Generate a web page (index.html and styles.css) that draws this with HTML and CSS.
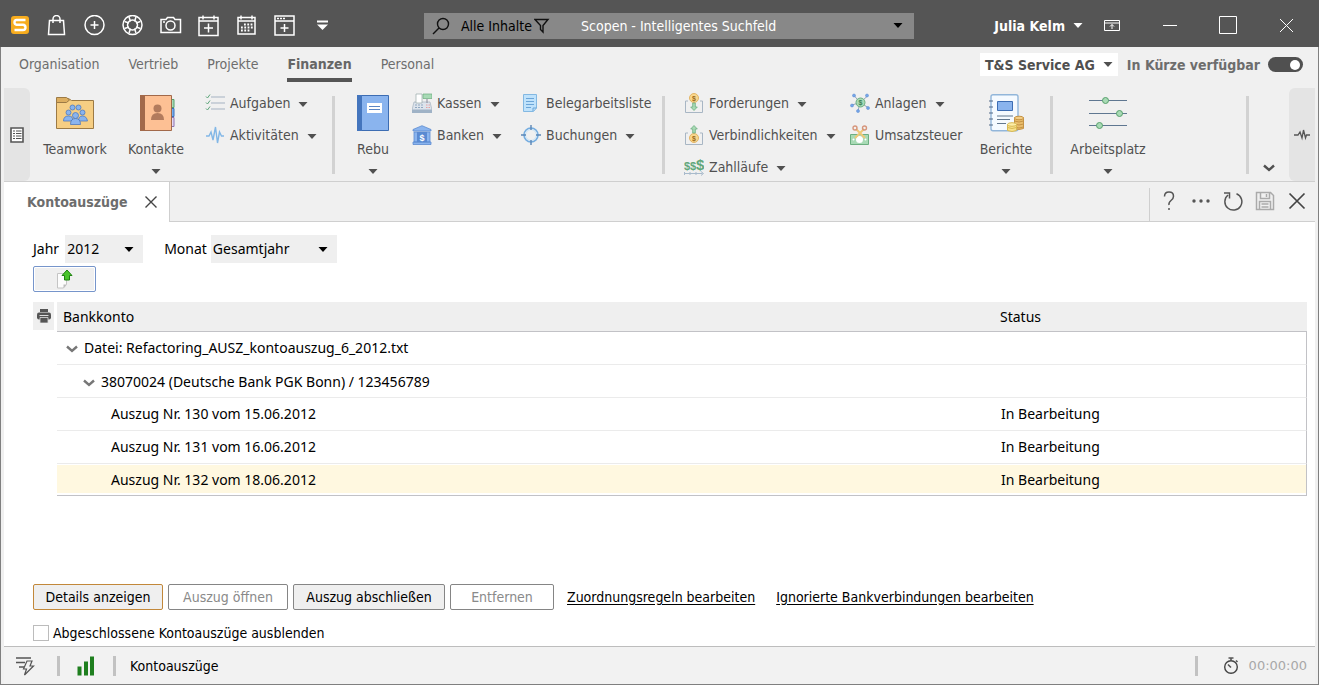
FILE: index.html
```html
<!DOCTYPE html>
<html lang="de">
<head>
<meta charset="utf-8">
<title>Kontoauszüge</title>
<link rel="stylesheet" href="styles.css">
</head>
<body>
<svg class="defs" aria-hidden="true">
  <symbol id="arrow" viewBox="0 0 10 5"><path d="M0.5 0h9L5 5z" fill="currentColor"/></symbol>
  <symbol id="chevron" viewBox="0 0 12 8"><path d="M1 1.500l5 4.500 5-4.500" fill="none" stroke="currentColor" stroke-width="2.400"/></symbol>
</svg>
<div class="window">
  <header class="titlebar">
    <div class="quick">
      <svg class="logo" viewBox="0 0 20 20"><rect x="1" y="0" width="18" height="18" rx="3" fill="#f7ac1e"/><path d="M15.500 4H6.500Q4.500 4 4.500 6.300Q4.500 8.500 6.500 8.700H13Q15.500 8.900 15.500 11.500Q15.500 14 13 14H4.500" fill="none" stroke="#fff" stroke-width="2.400"/></svg>
      <button class="tool" aria-label="Shop"><svg viewBox="0 0 22 22"><path d="M3.500 5.500h14l1 14h-16zM7 8V4a3.500 3.500 0 0 1 7 0v4"/></svg></button>
      <button class="tool" aria-label="Neu"><svg viewBox="0 0 22 22"><circle cx="10.500" cy="10" r="9.500"/><path d="M10.500 6v8M6.500 10h8"/></svg></button>
      <button class="tool" aria-label="Hilfe"><svg viewBox="0 0 22 22"><circle cx="10.500" cy="10" r="9.500"/><circle cx="10.500" cy="10" r="5"/><path d="M2.500 6.500L7 8M7 2l1.500 4.500M18.500 6.500L14 8M14 2l-1.500 4.500M2.500 13.500L7 12M7 18l1.500-4.500M18.500 13.500L14 12M14 18l-1.500-4.500"/></svg></button>
      <button class="tool" aria-label="Kamera"><svg viewBox="0 0 22 22"><path d="M1 4.500h5l1.500-2h6l1.500 2h5.500V17.500H1zM3 7h2"/><circle cx="10.500" cy="10.500" r="4.500"/></svg></button>
      <button class="tool" aria-label="Termin"><svg viewBox="0 0 22 22"><path d="M1 2.500h19v18H1zM1 6h19M5 .5v4M16 .5v4M10.500 8.500v9M6 13h9"/></svg></button>
      <button class="tool" aria-label="Kalender"><svg viewBox="0 0 22 22"><path d="M2 2.500h17V19H2zM2 6h17M5 .5v4M16 .5v4"/><path d="M8 9.500h9M5 12.500h12M5 15.500h9" stroke-width="2" stroke-dasharray="1.800 1.500"/></svg></button>
      <button class="tool" aria-label="Fenster"><svg viewBox="0 0 22 22"><path d="M1 1h19v19H1zM1 6h19M10.500 9v8M6.500 13h8"/><path d="M3 3.500h8" stroke-dasharray="2 1"/></svg></button>
      <button class="tool" aria-label="Anpassen"><svg viewBox="0 0 22 22"><path d="M5 6.500h11" stroke-width="2"/><path d="M5 9.500h11L10.500 15z" fill="#fff" stroke="none"/></svg></button>
    </div>
    <div class="search">
      <svg class="glass" viewBox="0 0 18 18"><circle cx="11" cy="7" r="5.500"/><path d="M7 11l-6 6"/></svg>
      <button class="scope">Alle Inhalte <svg viewBox="0 0 16 16"><path d="M1 1.500h13L9 7.500V14L6.500 11.500v-4z"/></svg></button>
      <input type="text" aria-label="Suche" placeholder="Scopen - Intelligentes Suchfeld">
      <button class="drop" aria-label="Suchverlauf"><svg class="arrow"><use href="#arrow"/></svg></button>
    </div>
    <div class="controls">
      <button class="user">Julia Kelm <svg class="arrow"><use href="#arrow"/></svg></button>
      <button class="ctl" aria-label="Menüband"><svg viewBox="0 0 20 20"><path d="M2.500 4.500h15v10h-15zM2.500 7h15M10 13V8.500M8 10.500l2-2 2 2"/></svg></button>
      <button class="ctl" aria-label="Minimieren"><svg viewBox="0 0 20 20"><path d="M3 9.500h14"/></svg></button>
      <button class="ctl" aria-label="Maximieren"><svg viewBox="0 0 20 20"><path d="M1.500 .5h17v17h-17z"/></svg></button>
      <button class="ctl" aria-label="Schließen"><svg viewBox="0 0 20 20"><path d="M4 3l13 13M17 3L4 16"/></svg></button>
    </div>
  </header>

  <nav class="menu">
    <a href="#organisation">Organisation</a>
    <a href="#vertrieb">Vertrieb</a>
    <a href="#projekte">Projekte</a>
    <a href="#finanzen" class="active">Finanzen</a>
    <a href="#personal">Personal</a>
    <div class="company">
      <button class="firm">T&amp;S Service AG <svg class="arrow"><use href="#arrow"/></svg></button>
      <label class="soon">In Kürze verfügbar <input type="checkbox" class="toggle" checked></label>
    </div>
  </nav>

  <section class="ribbon">
    <button class="strip left" aria-label="Navigation"><svg width="14" height="16" viewBox="0 0 14 16"><path d="M1 1h12v14H1z" fill="#fff" stroke="#555" stroke-width="1.600"/><path d="M3 4h2M3 6.500h2M3 9h2M3 11.500h2M6 4h5.500M6 6.500h5.500M6 9h5.500M6 11.500h5.500" stroke="#555"/></svg></button>

    <button class="big w80"><svg viewBox="0 0 40 38"><path d="M1.500 4.500h12l3 2h22v28h-37z" fill="#f6ce83" stroke="#9c7a45"/><path d="M1.500 3.500h10l3 2.500-3 2.500h-10z" fill="#dcae60" stroke="#9c7a45"/><g fill="#8ab4ee" stroke="#4c78c0" stroke-width=".8"><circle cx="17.500" cy="13.500" r="2.500"/><circle cx="23.500" cy="13.500" r="2.500"/><circle cx="13.500" cy="18.500" r="2.500"/><circle cx="27.500" cy="18.500" r="2.500"/><path d="M8.500 27q0-5 5-5t4 5zM23.500 27q0-5 4-5t5 5z"/><circle cx="20.500" cy="21.500" r="3"/><path d="M15.500 30.500q0-6 5-6t5 6z"/></g></svg><span>Teamwork</span></button>
    <button class="big w82"><svg viewBox="0 0 40 38"><path d="M34 5.500h4v8h-4z" fill="#a8dab5" stroke="#57a06c"/><path d="M34 14.500h4v8h-4z" fill="#75aef0" stroke="#3c6fb8"/><path d="M34 23.500h4v9h-4z" fill="#e4d8f4" stroke="#8c73b0"/><path d="M4.500 1.500h31v35h-31z" fill="#fdc094" stroke="#a2694a"/><path d="M4 1h5v36H4z" fill="#a2694a"/><circle cx="21.500" cy="14.500" r="4" fill="#b27b5d"/><path d="M15 26q0-7 6.500-7t6.500 7z" fill="#b27b5d"/></svg><span>Kontakte</span><svg class="arrow"><use href="#arrow"/></svg></button>
    <div class="col c1">
      <button class="small"><svg viewBox="0 0 20 20"><path d="M6 4h14M6 10h14M6 16h14" stroke="#a5b2c2"/><path d="M1 3.500l1.500 1.500L5 1.500M1 9.500l1.500 1.500L5 7.500M1 15.500l1.500 1.500L5 13.500" fill="none" stroke="#5da57a"/></svg>Aufgaben<svg class="arrow"><use href="#arrow"/></svg></button>
      <button class="small"><svg viewBox="0 0 20 20"><path d="M1 11h3l2-4 2 8 2.500-13 2 16 2-11 2 4h2.500" fill="none" stroke="#82b7e6" stroke-width="1.400"/></svg>Aktivitäten<svg class="arrow"><use href="#arrow"/></svg></button>
    </div>
    <i class="sep"></i>
    <button class="big w76"><svg viewBox="0 0 40 38"><path d="M4.500 1.500h31v35h-31z" fill="#8ab4ee" stroke="#3d6db3"/><path d="M4 1h5v36H4z" fill="#4475bd"/><path d="M14 9h15v10H14z" fill="#fff"/><path d="M16 12.500h11M16 15.500h11" stroke="#5b86c4"/></svg><span>Rebu</span><svg class="arrow"><use href="#arrow"/></svg></button>
    <div class="col c2">
      <button class="small"><svg viewBox="0 0 20 20"><path d="M2 9h16l2 8v2H0v-2z" fill="#dde4ec" stroke="#a3b1bf" stroke-width=".7"/><path d="M0 16.500h20V20H0z" fill="#9fb2c6"/><path d="M4 1h6v9H4z" fill="#fff" stroke="#9aa" stroke-width=".7"/><path d="M11 1h9v4.500h-9z" fill="#a8dab5" stroke="#6cae80" stroke-width=".7"/><path d="M15 6v4" stroke="#889"/><path d="M3 12h9M3 14.500h9" stroke="#91a8c0" stroke-dasharray="2 1"/><path d="M14 12h4M14 14.500h4" stroke="#e5a0a0" stroke-dasharray="1.500 1"/></svg>Kassen<svg class="arrow"><use href="#arrow"/></svg></button>
      <button class="small"><svg viewBox="0 0 20 20"><path d="M1 4.500L10 .7l9 3.800V6H1zM2 7h16v10H2zM1 17h18v2.500H1z" fill="#8ab4ee" stroke="#5a8ad0" stroke-width=".8"/><path d="M5 7h10v10H5z" fill="#5a8ad2"/><text x="10" y="16" text-anchor="middle" class="coin white">$</text></svg>Banken<svg class="arrow"><use href="#arrow"/></svg></button>
    </div>
    <div class="col c3">
      <button class="small"><svg viewBox="0 0 20 20"><path d="M2.500 1.500h13V15l-3 3.500h-10z" fill="#bfe2fb" stroke="#83b8e2"/><path d="M5 5.500h8M5 8.500h8M5 11.500h8M5 14.500h5M12 18v-3h3.500" fill="none" stroke="#6ba5d8"/></svg>Belegarbeitsliste</button>
      <button class="small"><svg viewBox="0 0 20 20"><circle cx="10" cy="10" r="7" fill="none" stroke="#75ade0" stroke-width="1.600"/><circle cx="10" cy="10" r="5.500" fill="none" stroke="#c4e2f8"/><path d="M10 0v5M10 15v5M0 10h5M15 10h5" stroke="#5b86b6" stroke-width="1.400"/></svg>Buchungen<svg class="arrow"><use href="#arrow"/></svg></button>
    </div>
    <i class="sep"></i>
    <div class="col c4">
      <button class="small"><svg viewBox="0 0 20 20"><path d="M4 8H1.500v11.500h17V8H16" fill="none" stroke="#a8b6c4"/><circle cx="10" cy="5" r="4.500" fill="#f9d88f" stroke="#e3b566"/><text x="10" y="7.500" text-anchor="middle" class="coin">$</text><path d="M8.700 10h2.600v4h2L10 17.500 6.700 14h2z" fill="#a8dab5" stroke="#6cae80" stroke-width=".8"/></svg>Forderungen<svg class="arrow"><use href="#arrow"/></svg></button>
      <button class="small"><svg viewBox="0 0 20 20"><path d="M4 8H1.500v11.500h17V8H16" fill="none" stroke="#a8b6c4"/><circle cx="10" cy="13" r="4.500" fill="#f9d88f" stroke="#e3b566"/><text x="10" y="15.500" text-anchor="middle" class="coin">$</text><path d="M8.700 8h2.600V4h2L10 .5 6.700 4h2z" fill="#a8dab5" stroke="#6cae80" stroke-width=".8"/></svg>Verbindlichkeiten<svg class="arrow"><use href="#arrow"/></svg></button>
      <button class="small"><svg viewBox="0 0 20 20"><text x="0" y="13" class="dollars">$$</text><text x="12" y="13" class="dollars large">$</text><path d="M.5 16.500h18M.5 15v3M6 15v3M12 15v3M17 14.500l2.500 2-2.500 2" fill="none" stroke="#a8bacb"/></svg>Zahlläufe<svg class="arrow"><use href="#arrow"/></svg></button>
    </div>
    <div class="col c5">
      <button class="small"><svg viewBox="0 0 20 20"><path d="M10 9.500L4 2.500M10 9.500l7-6M10 9.500L2 12M10 9.500l8 5M10 9.500L8 18" stroke="#93a5bb"/><circle cx="10.500" cy="9.500" r="4.500" fill="#a8dab5" stroke="#6cae80"/><text x="10.500" y="12" text-anchor="middle" class="coin green">$</text><g fill="#75a6ea" stroke="#5484cc" stroke-width=".5"><circle cx="4" cy="2.500" r="1.500"/><circle cx="17" cy="2.500" r="1.500"/><circle cx="2" cy="12.500" r="1.500"/><circle cx="18" cy="15" r="1.500"/><circle cx="8" cy="18" r="1.500"/></g></svg>Anlagen<svg class="arrow"><use href="#arrow"/></svg></button>
      <button class="small"><svg viewBox="0 0 20 20"><path d="M.5 9.500h18v10H.5z" fill="#a8dab5" stroke="#6cae80"/><circle cx="9.500" cy="14.500" r="3.500" fill="#fff"/><circle cx="3.500" cy="14.500" r="1" fill="#fff"/><circle cx="15.500" cy="14.500" r="1" fill="#fff"/><path d="M6 4l9 9M14 4l-9 9" stroke="#efc877" stroke-width="2"/><circle cx="5" cy="3" r="2" fill="none" stroke="#d6957b" stroke-width="1.400"/><circle cx="14.500" cy="3" r="2" fill="none" stroke="#d6957b" stroke-width="1.400"/></svg>Umsatzsteuer</button>
    </div>
    <button class="big w78"><svg viewBox="0 0 40 38"><rect x="5" y=".7" width="27" height="36" rx="2" fill="#f5faff" stroke="#92b6da" stroke-width="1.400"/><path d="M3 7h4M3 13h4M3 19h4M3 25h4M3 31h4" stroke="#546b88" stroke-width="1.200"/><path d="M11.500 7.500h15v9h-15z" fill="#8ab4ee" stroke="#3d6db3"/><path d="M11 22h16M11 25.500h13M11 29.500h9" stroke="#62788f" stroke-width="1.200"/><g stroke="#c59345"><path d="M28.500 23.500v11q4.500 2 9 0v-11z" fill="#e9bd6c"/><ellipse cx="33" cy="24" rx="4.500" ry="1.800" fill="#f3cd84"/><path d="M28.500 27q4.500 2 9 0M28.500 30q4.500 2 9 0M28.500 33q4.500 2 9 0" fill="none"/></g><g stroke="#d8b952"><path d="M21.500 30.500v6q4.500 2 9 0v-6z" fill="#f8e18c"/><ellipse cx="26" cy="30.500" rx="4.500" ry="1.800" fill="#fdeea8"/><path d="M21.500 33.500q4.500 2 9 0" fill="none"/></g></svg><span>Berichte</span><svg class="arrow"><use href="#arrow"/></svg></button>
    <i class="sep gap"></i>
    <button class="big w110"><svg viewBox="0 0 40 38"><path d="M1 6.500h38M1 19.500h38M1 31.500h38" stroke="#5f7791"/><g fill="#a8dab5" stroke="#57a06c"><circle cx="17.500" cy="6.500" r="3"/><circle cx="31.500" cy="19.500" r="3"/><circle cx="11.500" cy="31.500" r="3"/></g></svg><span>Arbeitsplatz</span><svg class="arrow"><use href="#arrow"/></svg></button>
    <i class="sep last"></i>
    <button class="more" aria-label="Mehr"><svg width="12" height="8"><use href="#chevron"/></svg></button>
    <button class="strip right" aria-label="Verlauf"><svg width="16" height="12" viewBox="0 0 16 12"><path d="M0 6h4l2-3 2 6 1.500-8 2 8 1-3H16" fill="none" stroke="#555" stroke-width="1.300"/></svg></button>
  </section>

  <div class="docbar">
    <div class="doctab">Kontoauszüge<button aria-label="Tab schließen"><svg width="14" height="14" viewBox="0 0 14 14"><path d="M1.500 1.500l11 11M12.500 1.500l-11 11" stroke="#444" stroke-width="1.400"/></svg></button></div>
    <div class="docactions">
      <button aria-label="Hilfe"><svg viewBox="0 0 20 20"><path d="M5.500 5.500q0-4.500 4.500-4.500t4.500 4.200q0 2.300-2.500 4.300t-2 4.500M10 17v2" fill="none" stroke="#555" stroke-width="1.500"/></svg></button>
      <button aria-label="Weitere"><svg viewBox="0 0 20 20"><g fill="#555"><circle cx="3" cy="10" r="1.700"/><circle cx="10" cy="10" r="1.700"/><circle cx="17" cy="10" r="1.700"/></g></svg></button>
      <button aria-label="Aktualisieren"><svg viewBox="0 0 20 20"><path d="M13.500 2.700A8.500 8.500 0 1 1 5 4M1 2h5.500v5.500" fill="none" stroke="#555" stroke-width="1.500"/></svg></button>
      <button aria-label="Speichern"><svg viewBox="0 0 20 20"><path d="M1.500 1.500h14l3 3v14h-17zM5.500 1.500v6h9v-6M4.500 18.500v-8h11v8M11.500 3v3M6.500 13h7M6.500 16h7" fill="none" stroke="#aaa" stroke-width="1.500"/></svg></button>
      <button aria-label="Schließen"><svg viewBox="0 0 20 20"><path d="M2.500 2.500l15 15M17.500 2.500l-15 15" stroke="#444" stroke-width="1.700"/></svg></button>
    </div>
  </div>

  <main>
    <form class="filters">
      <label for="jahr">Jahr</label>
      <span class="pick year"><select id="jahr"><option>2012</option></select><svg class="arrow"><use href="#arrow"/></svg></span>
      <label for="monat">Monat</label>
      <span class="pick month"><select id="monat"><option>Gesamtjahr</option></select><svg class="arrow"><use href="#arrow"/></svg></span>
    </form>
    <button class="import" aria-label="Importieren"><svg width="18" height="20" viewBox="0 0 18 20"><path d="M1.500 4.500h9v11l-3 3.500h-6z" fill="#fcfcfc" stroke="#c4c4c4"/><path d="M7.500 19v-3.500h3z" fill="#bbb"/><path d="M8.500 11V6.500H6L11 1l5 5.500h-2.500V11z" fill="#48c42a" stroke="#1f8210"/></svg></button>

    <div class="listing">
      <button class="print" aria-label="Drucken"><svg width="14" height="14" viewBox="0 0 14 14"><path d="M3 0h8v3H3z" fill="#555"/><rect x="0" y="3.500" width="14" height="7" rx="2" fill="#555"/><path d="M2.500 6.500h9" stroke="#ddd"/><path d="M3 8.500h8V14H3z" fill="#555" stroke="#ddd" stroke-width=".8"/></svg></button>
      <table>
        <thead><tr><th>Bankkonto</th><th class="status">Status</th></tr></thead>
        <tbody>
          <tr><td colspan="2" class="file"><button aria-label="Zuklappen"><svg width="12" height="8"><use href="#chevron"/></svg></button>Datei: Refactoring_AUSZ_kontoauszug_6_2012.txt</td></tr>
          <tr><td colspan="2" class="account"><button aria-label="Zuklappen"><svg width="12" height="8"><use href="#chevron"/></svg></button>38070024 (Deutsche Bank PGK Bonn) / 123456789</td></tr>
          <tr><td class="entry">Auszug Nr. 130 vom 15.06.2012</td><td>In Bearbeitung</td></tr>
          <tr><td class="entry">Auszug Nr. 131 vom 16.06.2012</td><td>In Bearbeitung</td></tr>
          <tr class="selected"><td class="entry">Auszug Nr. 132 vom 18.06.2012</td><td>In Bearbeitung</td></tr>
        </tbody>
      </table>
    </div>

    <div class="actions">
      <button class="act primary">Details anzeigen</button>
      <button class="act" disabled>Auszug öffnen</button>
      <button class="act wide">Auszug abschließen</button>
      <button class="act narrow" disabled>Entfernen</button>
      <a href="#regeln">Zuordnungsregeln bearbeiten</a>
      <a href="#ignoriert">Ignorierte Bankverbindungen bearbeiten</a>
    </div>
    <label class="hide"><input type="checkbox">Abgeschlossene Kontoauszüge ausblenden</label>
  </main>

  <footer>
    <svg width="20" height="20" viewBox="0 0 20 20"><path d="M1 2h15M1 6.500h9M4 11h5" stroke="#555" stroke-width="1.400"/><path d="M12 5h5l-2 5h3.500L9.500 19l2-6H8.500z" fill="#f2f2f2" stroke="#555" stroke-width="1.200"/></svg>
    <i class="fsep"></i>
    <svg width="20" height="20" viewBox="0 0 20 20"><path d="M2.500 19.500v-9M9 19.500v-14M15 19.500v-19" stroke="#1f7f1f" stroke-width="4"/></svg>
    <i class="fsep second"></i>
    <span>Kontoauszüge</span>
    <i class="fsep push"></i>
    <svg width="16" height="18" viewBox="0 0 16 18"><circle cx="8" cy="10" r="6.300" fill="none" stroke="#444" stroke-width="1.400"/><path d="M5.500 1h5M8 1v2.500M13 3.500l1.500 1.500M8 10.500L5 7.500" stroke="#555" stroke-width="1.600"/></svg>
    <time>00:00:00</time>
  </footer>
</div>
</body>
</html>
```
FILE: styles.css
```css
* { box-sizing: border-box; }
body { margin: 0; font: 14px/20px "DejaVu Sans Condensed", Tahoma, "Noto Sans", sans-serif; color: #000; }
button, input, select { font: inherit; color: inherit; margin: 0; padding: 0; border: 0; background: none; }
svg { flex: none; }
a { color: inherit; }
.defs { display: none; }
.arrow { width: 10px; height: 5px; }
.window { min-height: 100vh; display: flex; flex-direction: column; border: 1px solid #7f7f7f; border-top: 0; background: #f0f0f0; }

.titlebar { height: 47px; margin: 0 -1px; padding: 4px 4px 0 10px; display: flex; align-items: center; background: #555; color: #fff; }
.quick { display: flex; align-items: center; gap: 16px; width: 414px; }
.logo { width: 20px; height: 20px; }
.tool { height: 22px; }
.tool svg { display: block; width: 22px; height: 22px; fill: none; stroke: #fff; stroke-width: 1.5; }
.search { flex: 0 1 490px; height: 26px; display: flex; align-items: center; background: #888; }
.glass { width: 18px; height: 18px; margin-left: 8px; fill: none; stroke: #111; stroke-width: 1.4; }
.scope { display: flex; align-items: center; gap: 2px; margin-left: 11px; width: 120px; color: #000; white-space: nowrap; }
.scope svg { width: 16px; height: 16px; fill: none; stroke: #111; stroke-width: 1.4; }
.search input { flex: 1; min-width: 0; outline: 0; }
.search input::placeholder { color: #fff; opacity: 1; }
.drop { width: 32px; color: #000; display: flex; justify-content: center; }
.controls { margin-left: auto; display: flex; align-items: center; }
.user { display: flex; align-items: center; gap: 8px; font-weight: 700; white-space: nowrap; }
.ctl { width: 58px; height: 26px; display: grid; place-items: center; }
.ctl svg { width: 20px; height: 20px; fill: none; stroke: #fff; }

.menu { height: 41px; padding: 6px 15px 0 18px; display: flex; align-items: flex-start; gap: 29px; color: #6d6d6d; }
.menu a { height: 29px; line-height: 22px; text-decoration: none; }
.menu .active { font-weight: 700; color: #666; border-bottom: 4px solid #555; }
.company { margin-left: auto; display: flex; align-items: center; gap: 9px; font-weight: 700; }
.firm { height: 23px; padding: 0 5px; display: flex; align-items: center; gap: 8px; background: #fff; color: #505050; }
.soon { display: flex; align-items: center; gap: 8px; }
.toggle { appearance: none; width: 35px; height: 15px; border-radius: 8px; background: #505050; display: flex; justify-content: flex-end; align-items: center; padding: 0 3px; }
.toggle::after { content: ""; width: 10px; height: 10px; border-radius: 50%; background: #fff; }

.ribbon { height: 94px; margin: 0 3px; display: flex; border-bottom: 1px solid #cfcfcf; color: #505050; white-space: nowrap; }
.strip { width: 26px; background: #e4e4e4; display: grid; place-items: center; }
.left { border-radius: 0 6px 6px 0; margin-right: 5px; }
.right { border-radius: 6px 0 0 6px; }
.big { display: flex; flex-direction: column; align-items: center; padding-top: 6px; }
.big svg:first-child { width: 40px; height: 38px; }
.big span { margin: 7px 0 10px; }
.w76 { width: 76px; }
.w78 { width: 78px; }
.w80 { width: 80px; }
.w82 { width: 82px; }
.w110 { width: 110px; }
.col { display: flex; flex-direction: column; gap: 4px; padding-top: 1px; align-items: flex-start; }
.c1 { width: 127px; margin-left: 8px; }
.c2 { width: 109px; margin-left: 1px; }
.c3 { width: 141px; }
.c4 { width: 166px; margin-left: 19px; }
.c5 { width: 117px; }
.small { height: 28px; display: flex; align-items: center; }
.small svg:first-child { width: 20px; height: 20px; margin-right: 5px; }
.small .arrow { margin: 3px 0 0 8px; }
.coin { font: 700 7px "Liberation Sans", sans-serif; fill: #9a6a1c; }
.coin.white { font-size: 9px; fill: #fff; }
.coin.green { fill: #3c8258; }
.dollars { font: 700 11px "Liberation Sans", sans-serif; fill: #62a77b; }
.dollars.large { font-size: 15px; }
.sep { width: 3px; height: 78px; margin-top: 8px; background: #d2d2d2; }
.sep.gap { margin-left: 5px; }
.sep.last { margin-left: auto; }
.more { width: 40px; padding-top: 65px; }

.docbar { height: 40px; margin: 0 3px; display: flex; border-bottom: 1px solid #cfcfcf; }
.doctab { height: 40px; padding: 0 11px 0 23px; display: flex; align-items: center; gap: 16px; background: #fff; border-right: 1px solid #cfcfcf; color: #6d6d6d; font-weight: 700; }
.doctab button { display: flex; }
.docactions { margin: 6px 8px 0 auto; padding: 3px 0 0 9px; display: flex; align-items: flex-start; gap: 12px; border-left: 1px solid #cfcfcf; }
.docactions svg { display: block; width: 20px; height: 20px; }

main { flex: 1; margin: 0 3px; padding: 13px 8px 3px 29px; background: #fff; display: flex; flex-direction: column; }
.filters, table { font-family: "Noto Sans", Tahoma, sans-serif; }
.filters { display: flex; align-items: center; height: 28px; }
.pick { display: grid; align-items: center; height: 28px; background: #efefef; }
.pick > * { grid-area: 1 / 1; }
.pick select { appearance: none; height: 28px; padding-left: 2px; outline: 0; }
.pick .arrow { justify-self: end; margin-right: 9px; pointer-events: none; }
.year { width: 78px; margin: 0 21px 0 6px; }
.month { width: 126px; margin-left: 4px; }
.import { align-self: flex-start; width: 63px; height: 26px; margin-top: 3px; display: grid; place-items: center; background: #efefef; border: 1px solid #7695cb; border-radius: 2px; box-shadow: inset 0 0 0 1px #fff; }

.listing { margin-top: 10px; display: flex; align-items: flex-start; gap: 3px; }
.print { width: 21px; height: 28px; display: grid; place-items: center; background: #efefef; }
table { flex: 1; border-collapse: separate; border-spacing: 0; table-layout: fixed; }
th { height: 30px; padding: 0 6px; background: #efefef; font-weight: 400; text-align: left; border-bottom: 1px solid #c2c2c6; }
.status { width: 313px; }
td { height: 33px; padding: 0 7px; border-bottom: 1px solid #ebebeb; }
td:last-child { border-right: 1px solid #c2c2c6; }
tbody tr:last-child td { height: 32px; border-bottom-color: #c2c2c6; }
.selected td { background: #fff8e0; box-shadow: inset 0 1px #fff, inset 0 -2px #fff; }
td button { margin-right: 6px; color: #777; }
td.file { padding-left: 9px; }
td.account { padding: 2px 0 0 26px; }
td.entry { padding-left: 54px; }

.actions { margin-top: auto; display: flex; align-items: center; gap: 5px; }
.act { min-width: 120px; height: 26px; padding: 0 8px; border: 1px solid #858585; border-radius: 2px; background: #efefef; }
.act:disabled { background: #fff; color: #8a8a8a; }
.primary { min-width: 130px; border-color: #c2883a; }
.wide { min-width: 152px; }
.narrow { min-width: 104px; }
.actions a { margin-left: 8px; text-underline-offset: 2px; }
.actions a + a { margin-left: 16px; }
.hide { display: flex; align-items: center; gap: 4px; margin-top: 13px; }
.hide input { appearance: none; width: 16px; height: 16px; border: 1px solid #bcbcbc; background: #fff; }

footer { height: 38px; margin: 0 3px; padding: 0 8px 0 11px; display: flex; align-items: center; border-top: 1px solid #bdbdbd; background: #f2f2f2; }
.fsep { width: 3px; height: 20px; margin: 0 17px 0 22px; background: #c2c2c2; }
.second { margin: 0 14px 0 16px; }
.push { margin: 0 25px 0 auto; }
time { margin-left: 10px; color: #a8a8a8; font-family: "DejaVu Sans", sans-serif; font-size: 13px; }
```
